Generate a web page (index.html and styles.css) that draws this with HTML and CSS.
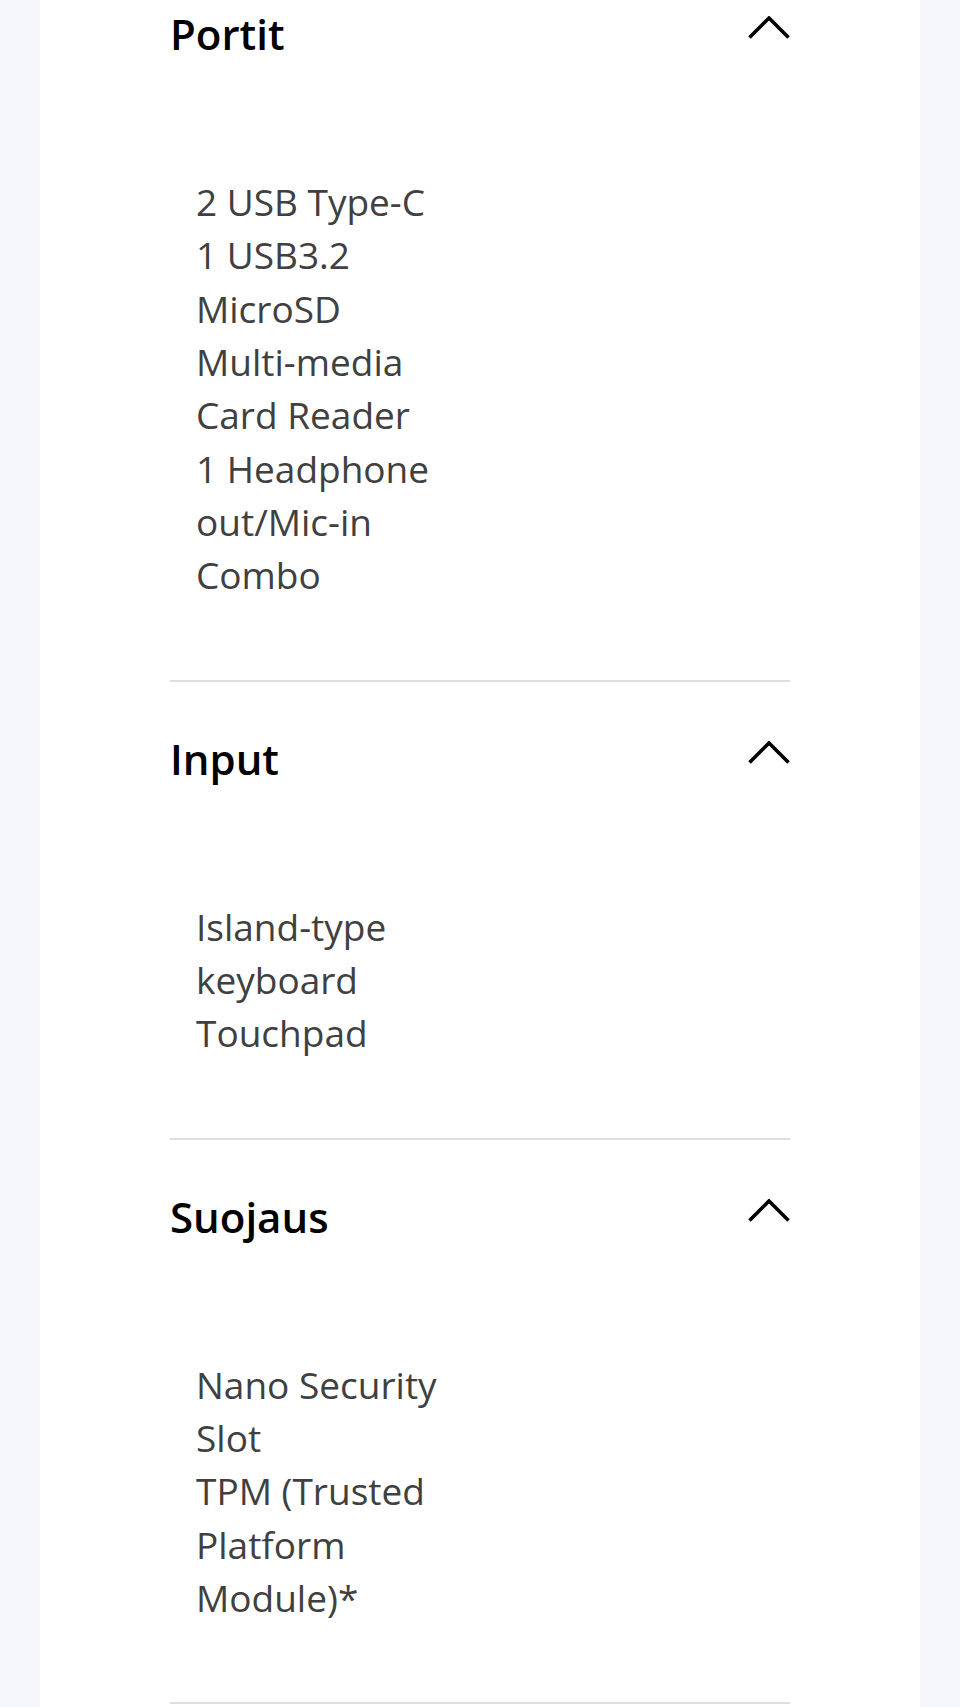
FILE: index.html
```html
<!DOCTYPE html>
<html lang="fi">
<head>
<meta charset="utf-8">
<title>Tekniset tiedot</title>
<link rel="stylesheet" href="styles.css">
</head>
<body>
<main class="card">
  <section class="acc">
    <div class="acc-head">
      <h3 class="acc-title">Portit</h3>
      <svg class="chev" viewBox="0 0 42 23" width="42" height="23" aria-hidden="true"><polyline points="1.5,21.5 21,2 40.5,21.5"/></svg>
    </div>
    <div class="acc-body">
      <p>2 USB Type-C<br>1 USB3.2<br>MicroSD<br>Multi-media<br>Card Reader<br>1 Headphone<br>out/Mic-in<br>Combo</p>
    </div>
  </section>
  <section class="acc">
    <div class="acc-head">
      <h3 class="acc-title">Input</h3>
      <svg class="chev" viewBox="0 0 42 23" width="42" height="23" aria-hidden="true"><polyline points="1.5,21.5 21,2 40.5,21.5"/></svg>
    </div>
    <div class="acc-body">
      <p>Island-type<br>keyboard<br>Touchpad</p>
    </div>
  </section>
  <section class="acc">
    <div class="acc-head">
      <h3 class="acc-title">Suojaus</h3>
      <svg class="chev" viewBox="0 0 42 23" width="42" height="23" aria-hidden="true"><polyline points="1.5,21.5 21,2 40.5,21.5"/></svg>
    </div>
    <div class="acc-body">
      <p>Nano Security<br>Slot<br>TPM (Trusted<br>Platform<br>Module)*</p>
    </div>
  </section>
</main>
</body>
</html>
```
FILE: styles.css
```css
html, body {
  margin: 0;
  padding: 0;
}
body {
  background: #f5f7fa;
  font-family: "Open Sans", "Noto Sans", sans-serif;
}
.card {
  margin: 0 40px;
  min-height: 1707px;
  background: #ffffff;
  padding: 0 130px;
  box-sizing: border-box;
}
.acc {
  border-bottom: 2px solid #dedede;
}
.acc-head {
  display: flex;
  justify-content: space-between;
  align-items: flex-start;
  padding-top: 49px;
}
.acc:first-child .acc-head {
  padding-top: 6px;
}
.acc-title {
  margin: 0;
  font-size: 42px;
  line-height: 56px;
  font-weight: 600;
  color: #000;
}
.chev {
  margin-top: 10px;
  display: block;
}
.chev polyline {
  fill: none;
  stroke: #000;
  stroke-width: 3.6;
  stroke-linecap: butt;
  stroke-linejoin: miter;
}
.acc-body {
  padding: 113px 0 78px 26px;
}
.acc-body p {
  margin: 0;
  font-size: 37px;
  line-height: 53.33px;
  color: #404040;
}
```
